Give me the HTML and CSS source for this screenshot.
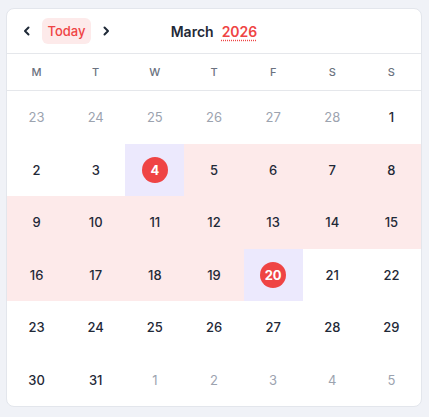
FILE: index.html
```html
<!DOCTYPE html>
<html lang="en">
<head>
<meta charset="utf-8">
<title>Calendar</title>
<link rel="stylesheet" href="styles.css">
</head>
<body>
<div class="card">
  <div class="header">
    <div class="nav">
      <button class="chev" aria-label="Previous month">
        <svg width="10" height="10" viewBox="0 0 10 10"><polyline points="6.5,1.5 3,5 6.5,8.5" fill="none" stroke="#1f2937" stroke-width="2" stroke-linecap="round" stroke-linejoin="round"/></svg>
      </button>
      <button class="today">Today</button>
      <button class="chev" aria-label="Next month">
        <svg width="10" height="10" viewBox="0 0 10 10"><polyline points="3.5,1.5 7,5 3.5,8.5" fill="none" stroke="#1f2937" stroke-width="2" stroke-linecap="round" stroke-linejoin="round"/></svg>
      </button>
    </div>
    <div class="title"><span class="month">March</span><span class="year">2026</span></div>
    <div></div>
  </div>
  <div class="weekdays">
    <div>M</div><div>T</div><div>W</div><div>T</div><div>F</div><div>S</div><div>S</div>
  </div>
  <div class="days">
    <div class="day other">23</div><div class="day other">24</div><div class="day other">25</div><div class="day other">26</div><div class="day other">27</div><div class="day other">28</div><div class="day">1</div>
    <div class="day">2</div><div class="day">3</div><div class="day edge"><span class="dot">4</span></div><div class="day range">5</div><div class="day range">6</div><div class="day range">7</div><div class="day range">8</div>
    <div class="day range">9</div><div class="day range">10</div><div class="day range">11</div><div class="day range">12</div><div class="day range">13</div><div class="day range">14</div><div class="day range">15</div>
    <div class="day range">16</div><div class="day range">17</div><div class="day range">18</div><div class="day range">19</div><div class="day edge"><span class="dot">20</span></div><div class="day">21</div><div class="day">22</div>
    <div class="day">23</div><div class="day">24</div><div class="day">25</div><div class="day">26</div><div class="day">27</div><div class="day">28</div><div class="day">29</div>
    <div class="day">30</div><div class="day">31</div><div class="day other">1</div><div class="day other">2</div><div class="day other">3</div><div class="day other">4</div><div class="day other">5</div>
  </div>
</div>
</body>
</html>
```
FILE: styles.css
```css
* { box-sizing: border-box; }
html, body { margin: 0; }
body {
  background: #f0f2f7;
  font-family: Inter, "Noto Sans", sans-serif;
  padding: 8px 7px 0 6px;
  height: 417px;
}
.card {
  background: #fff;
  border: 1px solid #e3e6ec;
  border-radius: 8px;
  overflow: hidden;
  height: 399px;
  display: flex;
  flex-direction: column;
}
.header {
  height: 45px;
  border-bottom: 1px solid #e5e7eb;
  display: grid;
  grid-template-columns: 1fr auto 1fr;
  align-items: center;
  padding: 0 10px;
}
.nav { display: flex; align-items: center; gap: 5px; }
button {
  border: 0;
  background: none;
  font-family: inherit;
  padding: 0;
  cursor: pointer;
}
.chev {
  width: 20px;
  height: 26px;
  display: flex;
  align-items: center;
  justify-content: center;
}
.today {
  height: 26px;
  width: 49px;
  border-radius: 6px;
  background: #fdeaea;
  color: #ef4444;
  font-size: 13px;
  font-weight: 500;
}
.title {
  display: flex;
  gap: 8px;
  font-size: 14px;
  font-weight: 600;
  color: #1f2937;
}
.year {
  color: #ef4444;
  text-decoration: underline dotted #ef4444;
  text-underline-offset: 3px;
}
.weekdays {
  display: grid;
  grid-template-columns: repeat(7, 1fr);
  height: 37px;
  border-bottom: 1px solid #e5e7eb;
  align-items: center;
  text-align: center;
  font-size: 11px;
  font-weight: 500;
  color: #6b7280;
}
.days {
  flex: 1;
  display: grid;
  grid-template-columns: repeat(7, 1fr);
  grid-template-rows: repeat(6, 1fr);
}
.day {
  display: flex;
  align-items: center;
  justify-content: center;
  font-size: 13px;
  font-weight: 500;
  color: #1f2937;
}
.day.other { color: #9ca3af; font-weight: 400; }
.day.range { background: #fdeaea; }
.day.edge { background: #ece9fd; }
.dot {
  width: 26px;
  height: 26px;
  border-radius: 50%;
  background: #ef4444;
  color: #fff;
  font-weight: 700;
  display: flex;
  align-items: center;
  justify-content: center;
}
```
